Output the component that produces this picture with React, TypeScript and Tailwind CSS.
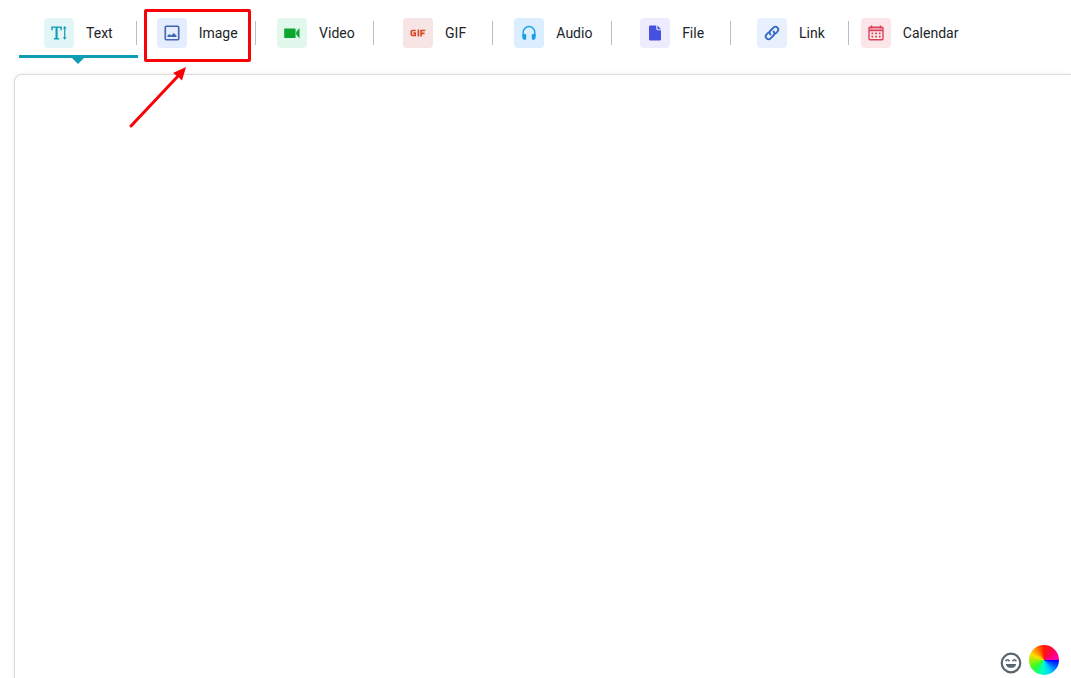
import React from "react";

type Tab = { name: string; tile: string; icon: React.ReactNode };

const TextIcon = () => (
  <svg viewBox="0 0 16 16" className="size-4" aria-hidden="true">
    <path
      fill="currentColor"
      d="M.3 1.400h10.500v3.800H9.600L9.100 2.700H6.600v10.200l1.700.400v1.200H2.800v-1.200l1.700-.400V2.700H2L1.500 5.200H.300zM13.700 1l1.900 2.500h-1.300v8.800h1.300l-1.900 2.500-1.900-2.500h1.300V3.500h-1.300z"
    />
  </svg>
);

const ImageIcon = () => (
  <svg viewBox="0 0 16 16" className="size-4" aria-hidden="true">
    <rect x="1.300" y="1.300" width="13.400" height="13.400" rx="1" fill="none" stroke="currentColor" strokeWidth="1.600" />
    <path fill="currentColor" d="M3.500 12v-1.200l2-1.900 1.700 1.700 2.600-2.600 2.700 2.800V12z" />
  </svg>
);

const VideoIcon = () => (
  <svg viewBox="0 0 16 16" className="size-4" aria-hidden="true">
    <path fill="currentColor" d="M.8 3.500h10.200a.6.6 0 0 1 .6.600v8.300a.6.6 0 0 1-.6.600H.8a.6.6 0 0 1-.6-.600V4.100A.6.6 0 0 1 .8 3.500zM12.200 7 15.500 3v10.500l-3.300-4z" />
  </svg>
);

const GifIcon = () => (
  <svg viewBox="0 0 16 8" className="h-2 w-4" aria-hidden="true">
    <path
      fill="none"
      stroke="currentColor"
      strokeWidth="1.700"
      d="M5.800 1.500H2.200L1.300 2.400V5.600L2.200 6.500H5.200V4.200H3.300M8.400.600V7.400M11.100 7.400V1.500H15.200M11.100 4.400H14.600"
    />
  </svg>
);

const AudioIcon = () => (
  <svg viewBox="0 0 16 16" className="size-4" aria-hidden="true">
    <path fill="none" stroke="currentColor" strokeWidth="1.400" d="M2.200 12V7.300a5.800 5.800 0 0 1 11.600 0V12" />
    <path fill="currentColor" d="M1.500 9H4.200a1 1 0 0 1 1 1v3.700a1 1 0 0 1-1 1H3.300a1.800 1.800 0 0 1-1.800-1.800zM14.500 9h-2.700a1 1 0 0 0-1 1v3.700a1 1 0 0 0 1 1h.9a1.800 1.800 0 0 0 1.800-1.800z" />
  </svg>
);

const FileIcon = () => (
  <svg viewBox="0 0 16 16" className="size-4" aria-hidden="true">
    <path fill="currentColor" d="M3.200.600h6v3.200A1.400 1.400 0 0 0 10.600 5.200h3.400v9a1.200 1.200 0 0 1-1.200 1.200H3.200A1.200 1.200 0 0 1 2 14.200V1.800A1.200 1.200 0 0 1 3.200.600zM10.400.600 14 4.200h-3.600z" />
  </svg>
);

const LinkIcon = () => (
  <svg viewBox="0 0 16 16" className="size-4" aria-hidden="true">
    <g fill="none" stroke="currentColor" strokeWidth="1.800" strokeLinecap="round">
      <path d="M6.500 9.500a2.800 2.800 0 0 1 0-4l2.900-2.900a2.800 2.800 0 0 1 4 4l-2 2" />
      <path d="M9.500 6.500a2.800 2.800 0 0 1 0 4l-2.900 2.900a2.800 2.800 0 0 1-4-4l2-2" />
    </g>
  </svg>
);

const CalendarIcon = () => (
  <svg viewBox="0 0 16 16" className="size-4" aria-hidden="true">
    <path fill="none" stroke="currentColor" strokeWidth="1.400" d="M2 2.300h12a1 1 0 0 1 1 1v10.400a1 1 0 0 1-1 1H2a1 1 0 0 1-1-1V3.300a1 1 0 0 1 1-1zM1 5.500h14M3.500.500v3M12.500.500v3" />
    <path fill="currentColor" d="M1.500 3h13v2h-13z" opacity=".4" />
    <path fill="currentColor" d="M3.500 7.500h1.700v1.700H3.500zM7.200 7.500h1.700v1.700H7.200zM10.900 7.500h1.700v1.700h-1.700zM3.500 10.800h1.700v1.700H3.500zM7.200 10.800h1.700v1.700H7.200zM10.900 10.800h1.700v1.700h-1.700z" />
  </svg>
);

const tabs: Tab[] = [
  { name: "Text", tile: "bg-[#e2f6f8] text-[#109db4]", icon: <TextIcon /> },
  { name: "Image", tile: "bg-[#e3edfd] text-[#4267b2]", icon: <ImageIcon /> },
  { name: "Video", tile: "bg-[#e2f8ec] text-[#0aa62f]", icon: <VideoIcon /> },
  { name: "GIF", tile: "bg-[#f7e5e5] text-[#d84a26]", icon: <GifIcon /> },
  { name: "Audio", tile: "bg-[#daeeff] text-[#129fe3]", icon: <AudioIcon /> },
  { name: "File", tile: "bg-[#ececfe] text-[#4650e0]", icon: <FileIcon /> },
  { name: "Link", tile: "bg-[#e8f0fd] text-[#2f68c8]", icon: <LinkIcon /> },
  { name: "Calendar", tile: "bg-[#fde6ea] text-[#d84358]", icon: <CalendarIcon /> },
];

const Callout = () => (
  <span className="pointer-events-none absolute inset-x-1.5 top-[9px] h-[53px] rounded-xs border-3 border-[#fa0007]">
    <svg viewBox="0 0 60 64" className="absolute top-[54px] -left-[19px] h-16 w-[60px]" aria-hidden="true">
      <path d="M3 60 51 9" stroke="#fa0007" strokeWidth="3" strokeLinecap="round" />
      <path d="M58 1 54 14.500 51 11.500 45 7z" fill="#fa0007" />
    </svg>
  </span>
);

export default function App() {
  return (
    <div className="flex min-h-screen flex-col overflow-hidden bg-white font-[Roboto,sans-serif] text-[#212529]">
      <nav aria-label="Content type" className="mr-[102px] ml-[19px] grid h-[74px] grid-cols-8">
        {tabs.map((tab, i) => (
          <div key={tab.name} className="relative">
            <button
              type="button"
              aria-current={i === 0 ? "true" : undefined}
              className={`flex h-[58px] w-full items-center justify-center gap-3 border-b-3 pt-[11px] text-sm leading-5 ${i === 0 ? "border-[#109db4]" : "border-transparent"}`}
            >
              <span className={`flex size-[30px] items-center justify-center rounded-sm ${tab.tile}`}>{tab.icon}</span>
              {tab.name}
            </button>
            {i === 0 && (
              <svg viewBox="0 0 12 6" className="mx-auto h-1.5 w-3" aria-hidden="true">
                <path d="M0 0h12L6 6z" fill="#109db4" />
              </svg>
            )}
            {i < tabs.length - 1 && <span className="absolute top-[21px] right-px h-6 w-px bg-[#b4bfc6]" />}
            {tab.name === "Image" && <Callout />}
          </div>
        ))}
      </nav>
      <main className="ml-3.5 flex flex-1 flex-col justify-end rounded-tl-lg border-t border-l border-[#dcdcdc] shadow-[0_0_4px_rgba(0,0,0,0.08)]">
        <div className="flex items-center justify-end gap-[7px] pr-3 pb-[3px]">
          <button type="button" aria-label="Insert emoji" className="mt-1.5 text-[#58646d]">
            <svg viewBox="0 0 22 22" className="size-[22px]" aria-hidden="true">
              <circle cx="11" cy="11" r="9.300" fill="none" stroke="currentColor" strokeWidth="2.200" />
              <path fill="none" stroke="currentColor" strokeWidth="1.600" d="M5.700 9.300q1.900-3 3.800 0M12.500 9.300q1.900-3 3.800 0" />
              <path fill="currentColor" d="M5.800 12h10.400a5.300 4.800 0 0 1-10.400 0z" />
            </svg>
          </button>
          <button
            type="button"
            aria-label="Background colour"
            className="size-[30px] rounded-full bg-[conic-gradient(#ff1a00,#ff0060_50deg,#f0a_88deg,#00f_92deg,#0cf_150deg,#0fc_185deg,#3f2_235deg,#fd0_295deg,#ff1a00)]"
          />
        </div>
      </main>
    </div>
  );
}
